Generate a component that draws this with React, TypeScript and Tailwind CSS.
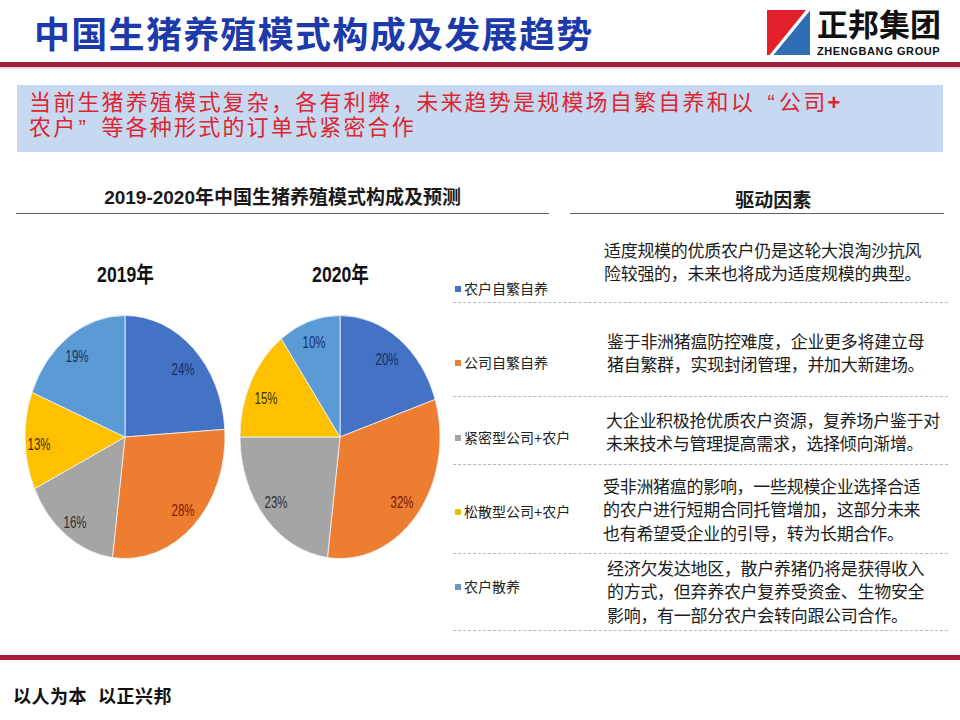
import React from "react";

type Slice = { v: number; color: string; label: string; lx: number; ly: number; tc: string };

const C = {
  blue: "#4472c4",
  orange: "#ed7d31",
  gray: "#a5a5a5",
  yellow: "#ffc000",
  light: "#5b9bd5",
};

const pie2019: Slice[] = [
  { v: 24, color: C.blue, label: "24%", lx: 158, ly: 54, tc: "#162d66" },
  { v: 28, color: C.orange, label: "28%", lx: 158, ly: 195, tc: "#7a1a08" },
  { v: 16, color: C.gray, label: "16%", lx: 50, ly: 207, tc: "#2e2e2e" },
  { v: 13, color: C.yellow, label: "13%", lx: 14, ly: 129, tc: "#3a2e00" },
  { v: 19, color: C.light, label: "19%", lx: 52, ly: 41, tc: "#162d66" },
];

const pie2020: Slice[] = [
  { v: 20, color: C.blue, label: "20%", lx: 147, ly: 44, tc: "#162d66" },
  { v: 32, color: C.orange, label: "32%", lx: 162, ly: 187, tc: "#7a1a08" },
  { v: 23, color: C.gray, label: "23%", lx: 36, ly: 187, tc: "#2e2e2e" },
  { v: 15, color: C.yellow, label: "15%", lx: 26, ly: 83, tc: "#3a2e00" },
  { v: 10, color: C.light, label: "10%", lx: 74, ly: 27, tc: "#162d66" },
];

function Pie({ data }: { data: Slice[] }) {
  const cx = 100;
  const cy = 122;
  const rx = 100;
  const ry = 121.5;
  const pt = (t: number) => [cx + rx * Math.sin(2 * Math.PI * t), cy - ry * Math.cos(2 * Math.PI * t)];
  let acc = 0;
  const paths = data.map((d, i) => {
    const a0 = acc;
    acc += d.v / 100;
    const a1 = acc;
    const [x0, y0] = pt(a0);
    const [x1, y1] = pt(a1);
    const large = a1 - a0 > 0.5 ? 1 : 0;
    return (
      <path
        key={i}
        d={`M ${cx} ${cy} L ${x0.toFixed(2)} ${y0.toFixed(2)} A ${rx} ${ry} 0 ${large} 1 ${x1.toFixed(2)} ${y1.toFixed(2)} Z`}
        fill={d.color}
        stroke="#f2f4f8"
        strokeWidth={0.8}
      />
    );
  });
  return (
    <svg width={200} height={244} viewBox="0 0 200 244">
      {paths}
      {data.map((d, i) => (
        <text
          key={i}
          x={d.lx}
          y={d.ly}
          textAnchor="middle"
          dominantBaseline="central"
          fontSize={16.5}
          textLength={23}
          lengthAdjust="spacingAndGlyphs"
          fill={d.tc}
          fontFamily="'Liberation Sans', Arial, sans-serif"
        >
          {d.label}
        </text>
      ))}
    </svg>
  );
}

type Row = {
  h: string;
  lpt: string;
  tpt: string;
  tpl: string;
  color: string;
  legend: string;
  lines: string[];
};

const rows: Row[] = [
  {
    h: "h-[89px]",
    lpt: "pt-[65px]",
    tpt: "pt-[26px]",
    tpl: "pl-[1px]",
    color: "bg-[#4472c4]",
    legend: "农户自繁自养",
    lines: ["适度规模的优质农户仍是这轮大浪淘沙抗风", "险较强的，未来也将成为适度规模的典型。"],
  },
  {
    h: "h-[94px]",
    lpt: "pt-[50px]",
    tpt: "pt-[28px]",
    tpl: "pl-[4px]",
    color: "bg-[#ed7d31]",
    legend: "公司自繁自养",
    lines: ["鉴于非洲猪瘟防控难度，企业更多将建立母", "猪自繁群，实现封闭管理，并加大新建场。"],
  },
  {
    h: "h-[68px]",
    lpt: "pt-[31px]",
    tpt: "pt-[13px]",
    tpl: "pl-[3px]",
    color: "bg-[#a5a5a5]",
    legend: "紧密型公司+农户",
    lines: ["大企业积极抢优质农户资源，复养场户鉴于对", "未来技术与管理提高需求，选择倾向渐增。"],
  },
  {
    h: "h-[89px]",
    lpt: "pt-[37px]",
    tpt: "pt-[11px]",
    tpl: "pl-[0px]",
    color: "bg-[#e6c300]",
    legend: "松散型公司+农户",
    lines: [
      "受非洲猪瘟的影响，一些规模企业选择合适",
      "的农户进行短期合同托管增加，这部分未来",
      "也有希望受企业的引导，转为长期合作。",
    ],
  },
  {
    h: "h-[77px]",
    lpt: "pt-[23px]",
    tpt: "pt-[4px]",
    tpl: "pl-[4px]",
    color: "bg-[#6f97c6]",
    legend: "农户散养",
    lines: [
      "经济欠发达地区，散户养猪仍将是获得收入",
      "的方式，但弃养农户复养受资金、生物安全",
      "影响，有一部分农户会转向跟公司合作。",
    ],
  },
];

function Logo() {
  return (
    <svg width={43} height={45} viewBox="0 0 43 45">
      <polygon points="0,0 39,0 2.5,45 0,45" fill="#e3202a" />
      <polygon points="43,0.5 43,45 6.5,45" fill="#2f6db5" />
    </svg>
  );
}

export default function App() {
  return (
    <div className="relative h-[720px] w-[960px] overflow-hidden bg-white font-['Liberation_Sans','Noto_Sans_CJK_SC',sans-serif] text-[#1e1e1e]">
      {/* header */}
      <div className="flex h-[62px] justify-between">
        <h1 className="pl-[34px] pt-[14px] text-[36px] font-bold leading-[44px] tracking-[1.3px] text-[#1c3aa9]">
          中国生猪养殖模式构成及发展趋势
        </h1>
        <div className="flex gap-[7px] pr-[17px] pt-[10px]">
          <Logo />
          <div className="flex w-[126px] flex-col">
            <div className="text-[31px] font-bold leading-[32px] tracking-[0px] text-[#111]">正邦集团</div>
            <div className="mt-[3px] whitespace-nowrap text-[11px] font-bold leading-[12px] tracking-[0.6px] text-[#111]">
              ZHENGBANG GROUP
            </div>
          </div>
        </div>
      </div>
      <div className="h-[5px] bg-[#a61c3c]" />
      <div className="h-[2px] bg-[#f3dde2]" />

      {/* summary box */}
      <div className="mx-[17px] mt-[16px] h-[67px] whitespace-nowrap bg-[#c6d9f0] pl-[12px] pt-[5px] text-[22px] leading-[25px] tracking-[2.2px] text-[#dc2530]">
        <div>
          当前生猪养殖模式复杂，各有利弊，未来趋势是规模场自繁自养和以
          <span className="inline-block w-[24px] pr-[2px] text-right">“</span>
          公司<span className="font-bold">+</span>
        </div>
        <div>
          农户<span className="inline-block w-[24px] pl-[1px] text-left">”</span>等各种形式的订单式紧密合作
        </div>
      </div>

      {/* headings */}
      <div className="mt-[34px] flex items-end px-[16px]">
        <div className="w-[536px] border-b border-[#606060] pb-[3px] text-center text-[19px] font-bold leading-[24px] text-[#1a1a1a]">
          2019-2020年中国生猪养殖模式构成及预测
        </div>
        <div className="ml-[21px] w-[375px] border-b border-[#606060] pl-[165px] text-[19px] font-bold leading-[24px] text-[#1a1a1a]">
          驱动因素
        </div>
      </div>

      {/* body */}
      <div className="flex">
        <div className="flex w-[453px] gap-[15px] pl-[25px] pt-[47px]">
          <div className="flex w-[200px] flex-col items-center">
            <div className="inline-block scale-x-80 text-[22px] font-bold leading-[28px] text-[#111]">2019年</div>
            <div className="mt-[26px]">
              <Pie data={pie2019} />
            </div>
          </div>
          <div className="flex w-[200px] flex-col items-center">
            <div className="inline-block scale-x-80 text-[22px] font-bold leading-[28px] text-[#111]">2020年</div>
            <div className="mt-[26px]">
              <Pie data={pie2020} />
            </div>
          </div>
        </div>
        <div className="w-[495px]">
          {rows.map((r, i) => (
            <div key={i} className={`flex border-b border-dashed border-[#b8b8b8] ${r.h}`}>
              <div className={`w-[150px] ${r.lpt}`}>
                <div className="flex items-center pl-[2px] text-[14px] leading-[20px] text-[#222]">
                  <span className={`mr-[3px] inline-block h-[6px] w-[6px] ${r.color}`} />
                  {r.legend}
                </div>
              </div>
              <div className={`whitespace-nowrap text-[17px] leading-[23.4px] tracking-[-0.3px] text-[#1c1c1c] ${r.tpt} ${r.tpl}`}>
                {r.lines.map((l, j) => (
                  <div key={j}>{l}</div>
                ))}
              </div>
            </div>
          ))}
        </div>
      </div>

      {/* footer */}
      <div className="mt-[24px] h-[5px] bg-[#a61c3c]" />
      <div className="mt-[25px] pl-[13px] text-[18px] font-bold leading-[24px] tracking-[0.5px] text-[#111]">以人为本&nbsp;&nbsp;以正兴邦</div>
    </div>
  );
}
